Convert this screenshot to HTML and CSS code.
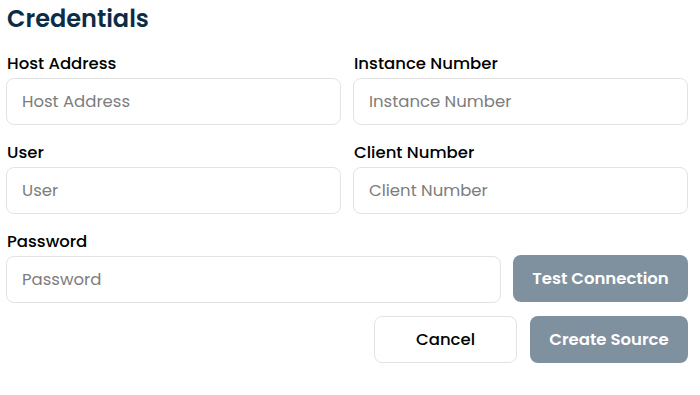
FILE: index.html
```html
<!DOCTYPE html>
<html lang="en">

<head>
  <meta charset="utf-8" />
  <meta name="viewport" content="width=device-width, initial-scale=1.0" />
  <title>Credentials</title>
  <link rel="stylesheet" href="styles.css">
</head>

<body>
  <div class="container">
    <h2>Credentials</h2>

    <div class="form-grid">
      <div class="field">
        <label for="host">Host Address</label>
        <input id="host" type="text" placeholder="Host Address">
      </div>
      <div class="field">
        <label for="instance">Instance Number</label>
        <input id="instance" type="text" placeholder="Instance Number">
      </div>
      <div class="field">
        <label for="user">User</label>
        <input id="user" type="text" placeholder="User">
      </div>
      <div class="field">
        <label for="client">Client Number</label>
        <input id="client" type="text" placeholder="Client Number">
      </div>
    </div>

    <!-- Password + test -->
    <div class="field">
      <label for="password">Password</label>
      <div class="password-row">
        <input id="password" type="password" placeholder="Password">
        <button class="btn btn-primary test-btn">Test Connection</button>
      </div>
    </div>

    <div class="actions">
      <button class="btn btn-secondary cancel-btn">Cancel</button>
      <button class="btn btn-primary create-btn">Create Source</button>
    </div>
  </div>
</body>

</html>
```

FILE: styles.css
```css
/* Global Reset */
* {
  margin: 0;
  padding: 0;
  box-sizing: border-box;
}

body {
  font-family: 'Poppins', 'DejaVu Sans', sans-serif;
  background-color: #ffffff;
  color: #111111;
}

.container {
  width: 682px;
  margin-left: 6px;
}

h2 {
  font-size: 24px;
  font-weight: 600;
  line-height: 38px;
  color: #0c2c46;
  padding-left: 1px;
  margin-bottom: 14px;
}

.form-grid {
  display: grid;
  grid-template-columns: 1fr 1fr;
  column-gap: 12px;
  row-gap: 16px;
  margin-bottom: 16px;
}

.field label {
  display: block;
  font-size: 16.5px;
  font-weight: 500;
  line-height: 24px;
  margin-bottom: 2px;
  padding-left: 1px;
  color: #000000;
}

.field input {
  width: 100%;
  height: 47px;
  border: 1px solid #e3e3e3;
  border-radius: 8px;
  padding: 0 15px;
  font-family: inherit;
  font-size: 16.5px;
  color: #111111;
  outline: none;
}

.field input::placeholder {
  color: #7d7d7d;
}

.password-row {
  display: flex;
  gap: 12px;
}

.password-row input {
  flex: 1;
}

.btn {
  height: 47px;
  border-radius: 8px;
  font-family: inherit;
  font-size: 16.5px;
  cursor: pointer;
}

.btn-primary {
  background-color: #7f919e;
  border: none;
  color: #ffffff;
  font-weight: 600;
}

.btn-secondary {
  background-color: #ffffff;
  border: 1px solid #e3e3e3;
  color: #000000;
  font-weight: 500;
}

.test-btn {
  width: 175px;
  margin-top: -1px;
}

.actions {
  display: flex;
  justify-content: flex-end;
  gap: 13px;
  margin-top: 13px;
}

.cancel-btn {
  width: 143px;
}

.create-btn {
  width: 158px;
}
```
